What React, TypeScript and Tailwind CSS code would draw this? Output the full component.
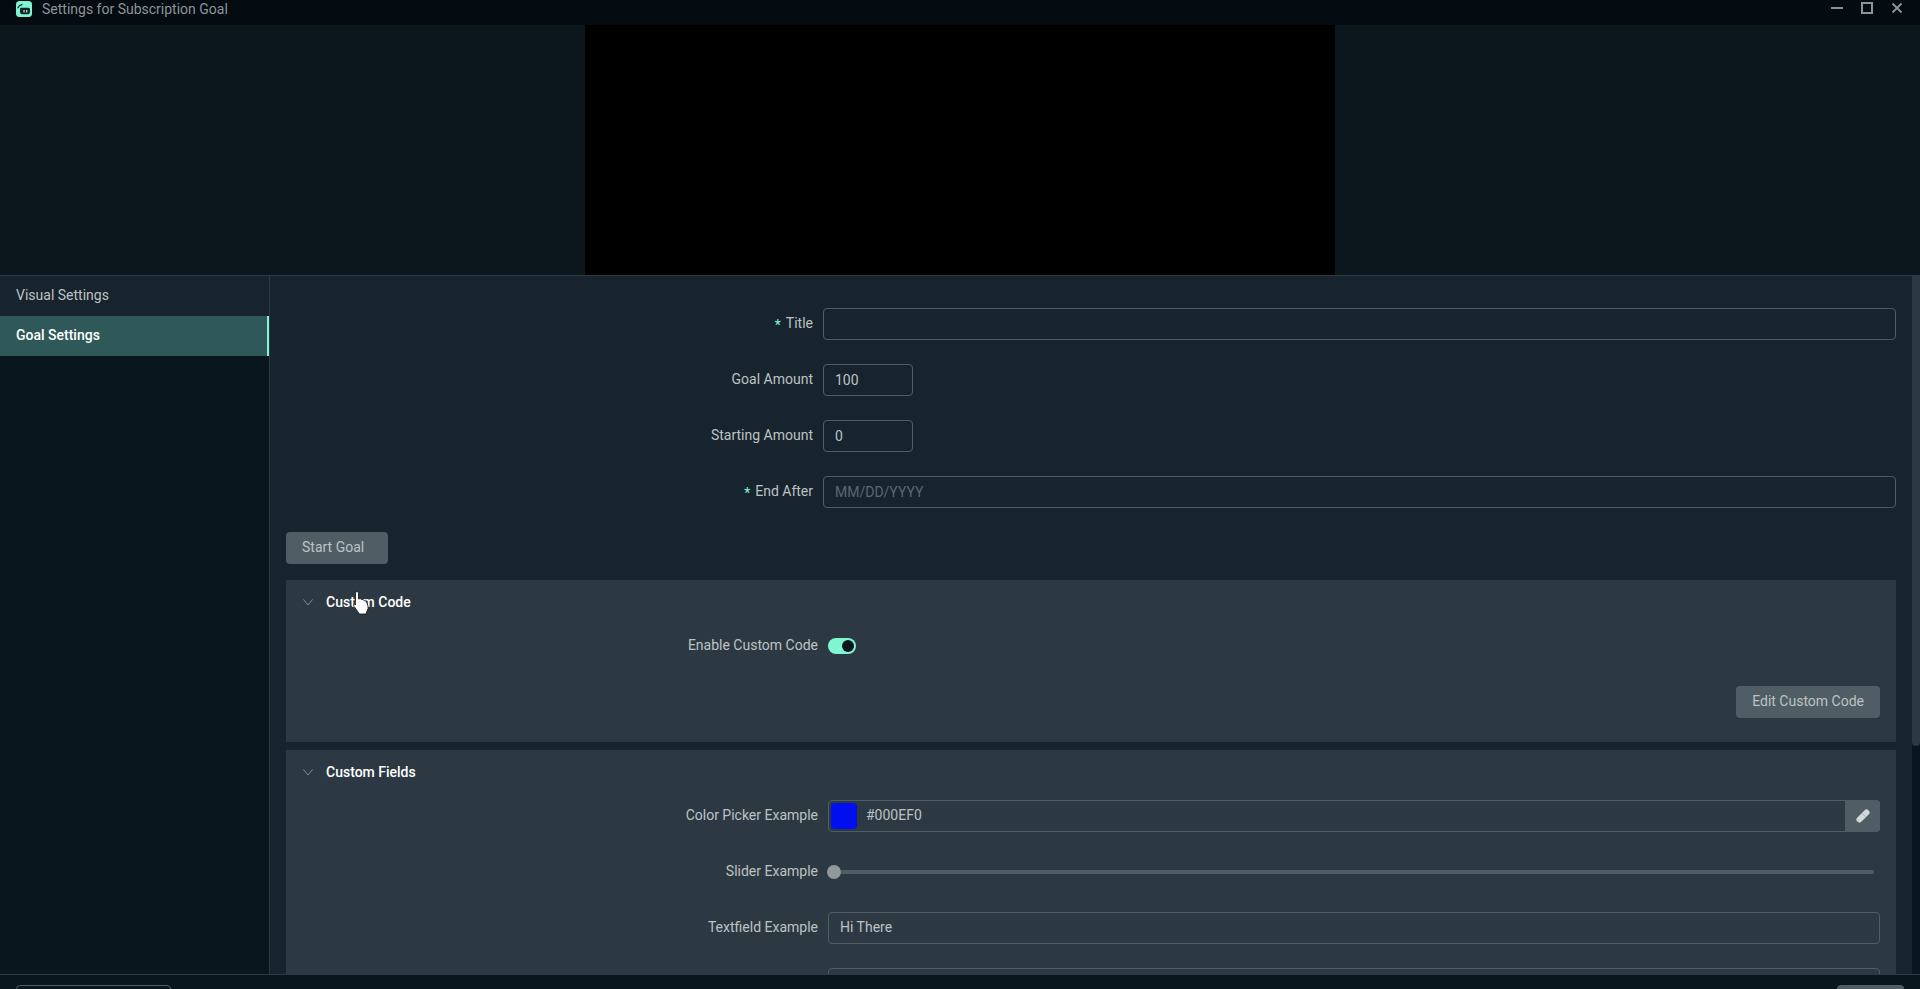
import type { ReactNode } from 'react';

const labelClass = 'pb-[2px] text-[14px] leading-[20px] text-[#bdc2c4] text-right shrink-0 whitespace-nowrap';
const inputClass =
  'h-8 px-[11px] bg-transparent border border-[#4f5d65] rounded text-[14px] text-[#bdc2c4] outline-none placeholder:text-[#5d676e]';
const buttonClass = 'h-8 pb-px rounded bg-[#4f5d65] text-[14px] text-[#bdc2c4]';

function Required() {
  return <span className="inline-block translate-y-[2px] text-[#80f5d2] mr-[5px]">*</span>;
}

function FormRow({
  label,
  labelWidth,
  required,
  children,
}: {
  label: string;
  labelWidth: string;
  required?: boolean;
  children: ReactNode;
}) {
  return (
    <div className="flex items-center gap-[10px] h-8">
      <div className={`${labelClass} ${labelWidth}`}>
        {required && <Required />}
        {label}
      </div>
      {children}
    </div>
  );
}

function Chevron() {
  return (
    <svg width="10" height="7" viewBox="0 0 10 7" fill="none" className="shrink-0 ml-px">
      <path d="M0.5 0.5 L5 6 L9.5 0.5" stroke="#7f8a90" strokeWidth="1" />
    </svg>
  );
}

function Panel({ title, children }: { title: string; children: ReactNode }) {
  return (
    <div className="bg-[#2d3942] px-4 pb-6 shrink-0">
      <div className="flex items-center gap-[13px] h-[44px] mb-[6px] text-[14px] font-medium text-white">
        <Chevron />
        {title}
      </div>
      {children}
    </div>
  );
}

function Logo() {
  return (
    <svg width="16" height="16" viewBox="0 0 16 16" className="shrink-0">
      <rect width="16" height="16" rx="3.5" fill="#80f5d2" />
      <path d="M4 8 Q4 6.8 5 6.8 H12.5 Q14 6.8 14 8.3 V11 Q14 13.3 11.7 13.3 H6.3 Q4 13.3 4 11 Z" fill="#17242d" />
      <path d="M1.6 7.2 Q2.8 4.4 6.4 3.4" stroke="#17242d" strokeWidth="1.1" fill="none" />
      <rect x="7.4" y="9" width="1.3" height="2.4" fill="#80f5d2" />
      <rect x="10" y="9" width="1.3" height="2.4" fill="#80f5d2" />
    </svg>
  );
}

function WindowControls() {
  return (
    <div className="flex items-start h-full pr-[17px] pt-[2px] gap-[18px]">
      <svg width="12" height="12" viewBox="0 0 12 12">
        <rect x="0" y="5" width="12" height="2" fill="#8d9499" />
      </svg>
      <svg width="12" height="12" viewBox="0 0 12 12">
        <rect x="1" y="1" width="10" height="10" fill="none" stroke="#8d9499" strokeWidth="2" />
      </svg>
      <svg width="12" height="12" viewBox="0 0 12 12">
        <path d="M1.5 1.5 L10.5 10.5 M10.5 1.5 L1.5 10.5" stroke="#8d9499" strokeWidth="1.8" />
      </svg>
    </div>
  );
}

function Eyedropper() {
  return (
    <svg width="16" height="16" viewBox="0 0 16 16">
      <path d="M4.5 11.5 L11.5 4.5" stroke="#d3d7da" strokeWidth="6" strokeLinecap="round" />
      <path d="M7.4 5.6 L10.4 8.6" stroke="#8fa3b2" strokeWidth="0.7" />
    </svg>
  );
}

function HandCursor() {
  return (
    <svg
      width="16"
      height="24"
      viewBox="0 0 16 24"
      className="absolute left-[353px] top-[591px] pointer-events-none"
    >
      <path
        d="M2.5 2 Q2.5 0.5 4 0.5 Q5.5 0.5 5.5 2 V8 Q7.5 7 8.5 8.5 Q10.5 8 11 9.7 Q13 9.2 13.5 11 L15 15 Q15.5 18 14 20 L13 23 H6.5 L1 15.5 Q0 13.5 1.5 13 L2.5 14 Z"
        fill="#ffffff"
        stroke="#111111"
        strokeWidth="0.8"
      />
    </svg>
  );
}

export default function App() {
  return (
    <div className="relative h-[989px] w-full overflow-hidden flex flex-col bg-[#09161d] font-['Roboto',sans-serif]">
      {/* Title bar */}
      <div className="h-[25px] shrink-0 bg-[#040c12] flex items-start justify-between">
        <div className="flex items-center gap-[10px] pl-4 pt-[2px] h-4">
          <Logo />
          <span className="text-[14px] leading-[18px] text-[#8d9499]">Settings for Subscription Goal</span>
        </div>
        <WindowControls />
      </div>

      {/* Preview */}
      <div className="h-[250px] shrink-0 bg-[#0c171d] flex justify-center">
        <div className="w-[750px] bg-black" />
      </div>

      {/* Body */}
      <div className="h-[699px] shrink-0 flex border-t border-[#2b3a44]">
        <div className="w-[270px] shrink-0 bg-[#09161d] border-r border-[#2b3a44]">
          <div className="h-10 pb-px flex items-center pl-4 bg-[#17242d] text-[14px] text-[#bdc2c4]">Visual Settings</div>
          <div className="h-10 pb-px flex items-center pl-4 bg-[#2f5958] border-r-2 border-[#80f5d2] text-[14px] font-medium text-white">
            Goal Settings
          </div>
        </div>

        <div className="flex-1 min-w-0 bg-[#17242d] overflow-hidden px-4 pt-8 flex flex-col">
          <div className="flex flex-col gap-6">
            <FormRow label="Title" labelWidth="w-[527px]" required>
              <input className={`${inputClass} flex-1 min-w-0`} />
            </FormRow>
            <FormRow label="Goal Amount" labelWidth="w-[527px]">
              <input className={`${inputClass} w-[90px]`} defaultValue="100" />
            </FormRow>
            <FormRow label="Starting Amount" labelWidth="w-[527px]">
              <input className={`${inputClass} w-[90px]`} defaultValue="0" />
            </FormRow>
            <FormRow label="End After" labelWidth="w-[527px]" required>
              <input className={`${inputClass} flex-1 min-w-0`} placeholder="MM/DD/YYYY" />
            </FormRow>
          </div>

          <button className={`${buttonClass} w-[102px] mt-6 mb-4 pl-4 text-left shrink-0`}>Start Goal</button>

          <div className="flex flex-col gap-2">
            <Panel title="Custom Code">
              <FormRow label="Enable Custom Code" labelWidth="w-[516px]">
                <div className="w-7 h-4 rounded-full bg-[#80f5d2] flex items-center justify-end pr-[2px]">
                  <div className="w-3 h-3 rounded-full bg-[#09161d]" />
                </div>
              </FormRow>
              <div className="flex justify-end mt-6">
                <button className={`${buttonClass} px-4`}>Edit Custom Code</button>
              </div>
            </Panel>

            <Panel title="Custom Fields">
              <div className="flex flex-col gap-6">
                <FormRow label="Color Picker Example" labelWidth="w-[516px]">
                  <div className="flex-1 min-w-0 h-8 flex items-center border border-[#4f5d65] rounded">
                    <div className="w-[26px] h-[26px] ml-[2px] rounded-sm bg-[#000ef0]" />
                    <span className="flex-1 pl-[9px] pb-px text-[14px] text-[#bdc2c4]">#000EF0</span>
                    <div className="w-[35px] h-8 -mr-px rounded-r bg-[#4f5d65] flex items-center justify-center">
                      <Eyedropper />
                    </div>
                  </div>
                </FormRow>
                <FormRow label="Slider Example" labelWidth="w-[516px]">
                  <div className="flex-1 min-w-0 flex items-center pr-[6px] -ml-px">
                    <div className="w-[14px] h-[14px] rounded-full bg-[#91979b] shrink-0" />
                    <div className="flex-1 h-1 rounded-r-full bg-[#4f5d65]" />
                  </div>
                </FormRow>
                <FormRow label="Textfield Example" labelWidth="w-[516px]">
                  <input className={`${inputClass} pb-[2px] flex-1 min-w-0`} defaultValue="Hi There" />
                </FormRow>
                <FormRow label="" labelWidth="w-[516px]">
                  <input className={`${inputClass} flex-1 min-w-0`} />
                </FormRow>
              </div>
            </Panel>
          </div>
        </div>

        {/* Scrollbar */}
        <div className="w-2 shrink-0 bg-[#09161d]">
          <div className="h-[470px] rounded-b-full rounded-t-sm bg-[#2d3942]" />
        </div>
      </div>

      {/* Footer */}
      <div className="flex-1 border-t border-[#2b3a44] bg-[#09161d] flex justify-between px-4 pt-[10px]">
        <button className="w-[155px] h-8 rounded border border-[#4f5d65] shrink-0" />
        <button className="w-[67px] h-8 rounded bg-[#4f5d65] shrink-0" />
      </div>

      <HandCursor />
    </div>
  );
}
